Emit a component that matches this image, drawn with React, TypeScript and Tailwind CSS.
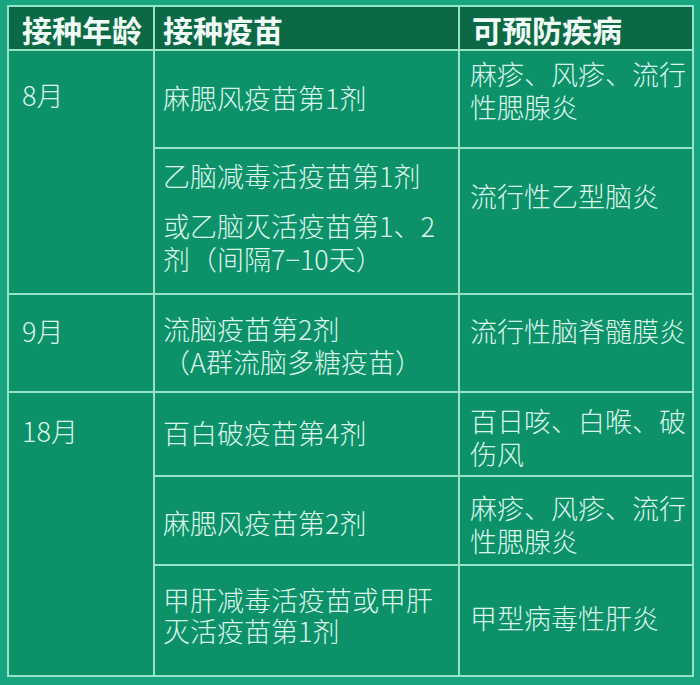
import React from "react";

const font = { fontFamily: '"Noto Sans CJK SC", "Noto Sans", sans-serif' };

function Cell({ className = "", children }: { className?: string; children?: React.ReactNode }) {
  return (
    <div className={`bg-[#0d9168] text-[#dcf6ec] text-[27px] leading-[33px] font-light ${className}`}>{children}</div>
  );
}

function Head({ className = "", children }: { className?: string; children?: React.ReactNode }) {
  return (
    <div className={`bg-[#0b6a45] text-[#f0fbf6] text-[30px] leading-[42px] font-bold pt-[1px] ${className}`}>
      {children}
    </div>
  );
}

export default function App() {
  return (
    <div className="w-[700px] h-[685px] bg-[#18a47f] pt-[5px] pl-[7px] overflow-hidden" style={font}>
      <div className="w-[687px] grid grid-cols-[144px_303px_232px] grid-rows-[42px_96px_144px_96px_82px_87px_109px] gap-[2px] p-[2px] bg-[#95e4c8]">
        <Head className="pl-[13px]">接种年龄</Head>
        <Head className="pl-[8px]">接种疫苗</Head>
        <Head className="pl-[12px]">可预防疾病</Head>

        <Cell className="row-span-2 pl-[13px] pt-[27px]">8月</Cell>
        <Cell className="pl-[8px] pt-[30px]">麻腮风疫苗第1剂</Cell>
        <Cell className="pl-[10px] pt-[6px]">
          <div>麻疹、风疹、流行</div>
          <div>性腮腺炎</div>
        </Cell>

        <Cell className="pl-[8px] pt-[10px]">
          <div>乙脑减毒活疫苗第1剂</div>
          <div className="mt-[17px]">或乙脑灭活疫苗第1、2</div>
          <div>剂（间隔7−10天）</div>
        </Cell>
        <Cell className="pl-[10px] pt-[30px]">流行性乙型脑炎</Cell>

        <Cell className="pl-[13px] pt-[19px]">9月</Cell>
        <Cell className="pl-[8px] pt-[17px]">
          <div>流脑疫苗第2剂</div>
          <div>（A群流脑多糖疫苗）</div>
        </Cell>
        <Cell className="pl-[10px] pt-[19px]">流行性脑脊髓膜炎</Cell>

        <Cell className="row-span-3 pl-[13px] pt-[21px]">18月</Cell>
        <Cell className="pl-[8px] pt-[23px]">百白破疫苗第4剂</Cell>
        <Cell className="pl-[10px] pt-[11px]">
          <div>百日咳、白喉、破</div>
          <div>伤风</div>
        </Cell>

        <Cell className="pl-[8px] pt-[29px]">麻腮风疫苗第2剂</Cell>
        <Cell className="pl-[10px] pt-[14px]">
          <div>麻疹、风疹、流行</div>
          <div>性腮腺炎</div>
        </Cell>

        <Cell className="pl-[8px] pt-[18px]">
          <div className="leading-[31px]">甲肝减毒活疫苗或甲肝</div>
          <div className="leading-[31px]">灭活疫苗第1剂</div>
        </Cell>
        <Cell className="pl-[10px] pt-[35px]">甲型病毒性肝炎</Cell>
      </div>
    </div>
  );
}
